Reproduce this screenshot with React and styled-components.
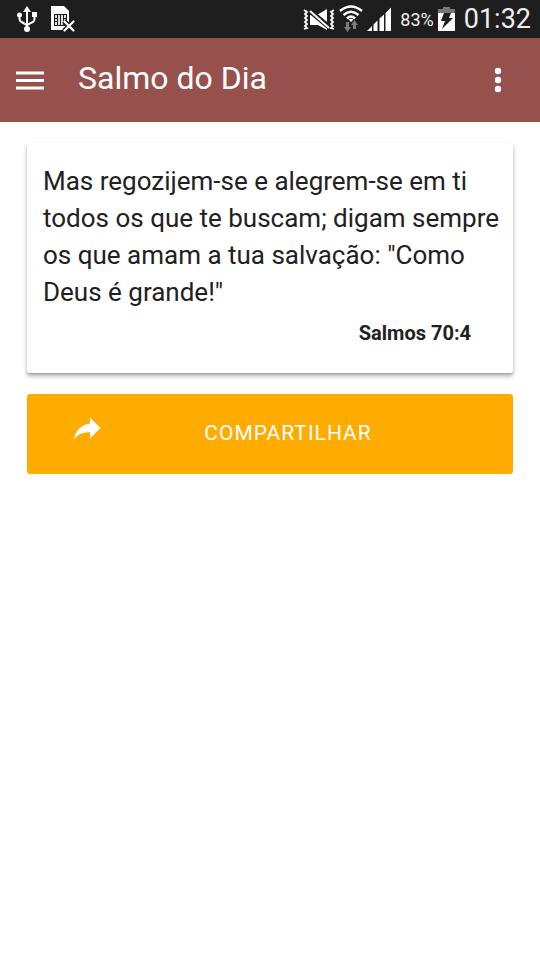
import React from "react";
import styled, { createGlobalStyle } from "styled-components";

const GlobalStyle = createGlobalStyle`
  *, *::before, *::after { box-sizing: border-box; }
  body {
    margin: 0;
    background: #fff;
    color: #212121;
    font-family: Roboto, "Liberation Sans", sans-serif;
  }
`;

const StatusBar = styled.div`
  display: flex;
  align-items: center;
  justify-content: space-between;
  height: 38px;
  padding: 0 9px 0 16px;
  background: #1e1e1e;
  color: #fff;
`;

const StatusGroup = styled.div`
  display: flex;
  align-items: center;
  gap: ${({ $gap }) => $gap}px;
`;

const StatusIcon = styled.svg`
  display: block;
  flex: none;
`;

const BatteryLevel = styled.span`
  margin-left: 4px;
  padding-top: 2px;
  font-size: 18px;
  line-height: 36px;
  color: #eee;
`;

const Clock = styled.time`
  margin-left: 5px;
  font-size: 27px;
  line-height: 38px;
  color: #eee;
`;

const AppBar = styled.header`
  display: flex;
  align-items: center;
  height: 84px;
  padding: 0 24px 0 12px;
  background: #96514d;
  color: #fff;
`;

const IconButton = styled.button`
  display: grid;
  place-items: center;
  width: 36px;
  height: 48px;
  padding: 0;
  border: 0;
  background: none;
  color: inherit;
  cursor: pointer;
`;

const Title = styled.h1`
  flex: 1;
  margin: 0;
  padding: 0 0 4px 30px;
  font-size: 32px;
  font-weight: 400;
  line-height: 40px;
`;

const Content = styled.main`
  display: flex;
  flex-direction: column;
  gap: 21px;
  padding: 21px 27px;
`;

const VerseCard = styled.article`
  padding: 20px 12px 21px 16px;
  background: #fff;
  border-radius: 2px;
  box-shadow: 0 3px 4px rgba(0, 0, 0, 0.32), 0 1px 1px rgba(0, 0, 0, 0.12);
`;

const Verse = styled.p`
  margin: 0;
  font-size: 26px;
  line-height: 37px;
`;

const Reference = styled.p`
  margin: 0;
  padding: 7px 30px 4px 0;
  font-size: 20px;
  font-weight: 700;
  line-height: 30px;
  text-align: right;
`;

const ShareButton = styled.button`
  display: grid;
  grid-template-columns: 36px 1fr;
  align-items: center;
  height: 80px;
  padding: 0 42px;
  border: 0;
  border-radius: 3px;
  background: #ffab00;
  color: #fff;
  font: 400 21px/32px Roboto, "Liberation Sans", sans-serif;
  letter-spacing: 1px;
  text-transform: uppercase;
  cursor: pointer;
`;

const ShareIcon = styled.svg`
  display: block;
  margin-bottom: 12px;
`;

const ShareLabel = styled.span`
  padding-bottom: 2px;
  text-align: center;
`;

function UsbIcon() {
  return (
    <StatusIcon width="22" height="28" viewBox="0 0 22 28" fill="#fff" aria-label="USB">
      <path d="M11 1l4 6h-3v17h-2V7H7z" />
      <circle cx="11" cy="24" r="3" />
      <circle cx="3.5" cy="10" r="2.500" />
      <path d="M16 7h5v5h-5z" />
      <path d="M3.500 10v4q0 2 2 3l5.500 3 6-3q1.500-1 1.500-3v-3" fill="none" stroke="#fff" strokeWidth="2" />
    </StatusIcon>
  );
}

function SimIcon() {
  return (
    <StatusIcon width="25" height="28" viewBox="0 0 25 28" aria-label="SIM">
      <path d="M1 1h13l5 5v19H1z" fill="#fff" />
      <path d="M4 9h13v12H4z" fill="#1e1e1e" />
      <path d="M5 10h2v3H5zM5 14h2v2H5zM5 17h2v3H5zM8 10h2v10H8zM11 10h2v10h-2zM14 10h2v3h-2zM14 14h2v2h-2z" fill="#ddd" />
      <path d="M14 16l10 10M24 16L14 26" stroke="#1e1e1e" strokeWidth="5" />
      <path d="M14.500 16.500l9 9M23.500 16.500l-9 9" stroke="#fff" strokeWidth="2.200" strokeLinecap="round" />
    </StatusIcon>
  );
}

function VibrateIcon() {
  return (
    <StatusIcon width="32" height="24" viewBox="0 0 32 24" aria-label="Vibrate">
      <path d="M14 8l10-6v14z" fill="#fff" />
      <path d="M7 8v10h8l9 5v-3L9 8z" fill="#fff" />
      <path d="M7 4l19 16" stroke="#1e1e1e" strokeWidth="5" />
      <path d="M7 4l19 17" stroke="#fff" strokeWidth="2" />
      <path
        d="M1 3l3 2-2 2 2 2-2 2 2 2-2 2 2 2-2 2 2 2-3 1M31 3l-3 2 2 2-2 2 2 2-2 2 2 2-2 2 2 2-2 2 3 1"
        fill="none"
        stroke="#fff"
        strokeWidth="1.800"
      />
    </StatusIcon>
  );
}

function WifiIcon() {
  return (
    <StatusIcon width="24" height="28" viewBox="0 0 24 28" aria-label="Wi-Fi">
      <g fill="none" stroke="#fff" strokeWidth="2.500">
        <path d="M1 6Q12-3 23 6" />
        <path d="M4.500 10Q12 3.500 19.500 10" />
        <path d="M8 13.500Q12 9.500 16 13.500" />
      </g>
      <path d="M9.500 14.500q2.500-1.500 5 0L12 17z" fill="#fff" />
      <path d="M7 17h3v5h2l-3.500 5L5 22h2zM14 24h3v-4h2l-3.500-5L12 20h2z" fill="#7b7b7b" />
    </StatusIcon>
  );
}

function SignalIcon() {
  return (
    <StatusIcon width="25" height="26" viewBox="0 0 25 26" fill="#fff" aria-label="Signal">
      <path d="M0 25l5-5v5zM6.500 25v-6.500l4-4V25zM12.500 25V12.500l4.500-4V25zM18.500 25V7L24 1.500V25z" />
    </StatusIcon>
  );
}

function BatteryIcon() {
  return (
    <StatusIcon width="17" height="24" viewBox="0 0 17 24" aria-label="Charging">
      <path d="M5 0h7v2h5v4H0V2h5z" fill="#777" />
      <path d="M0 6h17v18H0z" fill="#fff" />
      <path d="M6 6h7l-2 5h4L4 22l3-8H3z" fill="#1e1e1e" />
    </StatusIcon>
  );
}

export default function App() {
  return (
    <>
      <GlobalStyle />
      <StatusBar>
        <StatusGroup $gap={12}>
          <UsbIcon />
          <SimIcon />
        </StatusGroup>
        <StatusGroup $gap={4}>
          <VibrateIcon />
          <WifiIcon />
          <SignalIcon />
          <BatteryLevel>83%</BatteryLevel>
          <BatteryIcon />
          <Clock>01:32</Clock>
        </StatusGroup>
      </StatusBar>
      <AppBar>
        <IconButton type="button" aria-label="Menu">
          <svg width="28" height="20" viewBox="0 0 28 20" fill="#fff">
            <path d="M0 1.500h28v3H0zM0 9h28v3H0zM0 16.500h28v3H0z" />
          </svg>
        </IconButton>
        <Title>Salmo do Dia</Title>
        <IconButton type="button" aria-label="Mais opções">
          <svg width="8" height="26" viewBox="0 0 8 26" fill="#fff">
            <circle cx="4" cy="4" r="3.200" />
            <circle cx="4" cy="13" r="3.200" />
            <circle cx="4" cy="22" r="3.200" />
          </svg>
        </IconButton>
      </AppBar>
      <Content>
        <VerseCard>
          <Verse>
            Mas regozijem-se e alegrem-se em ti todos os que te buscam; digam
            sempre os que amam a tua salvação: "Como Deus é grande!"
          </Verse>
          <Reference>Salmos 70:4</Reference>
        </VerseCard>
        <ShareButton type="button">
          <ShareIcon width="36" height="36" viewBox="0 0 24 24" fill="#fff" aria-hidden="true">
            <path d="M14 9V5l7 7-7 7v-4.100c-5 0-8.500 1.600-11 5.100 1-5 4-10 11-11z" />
          </ShareIcon>
          <ShareLabel>Compartilhar</ShareLabel>
        </ShareButton>
      </Content>
    </>
  );
}
